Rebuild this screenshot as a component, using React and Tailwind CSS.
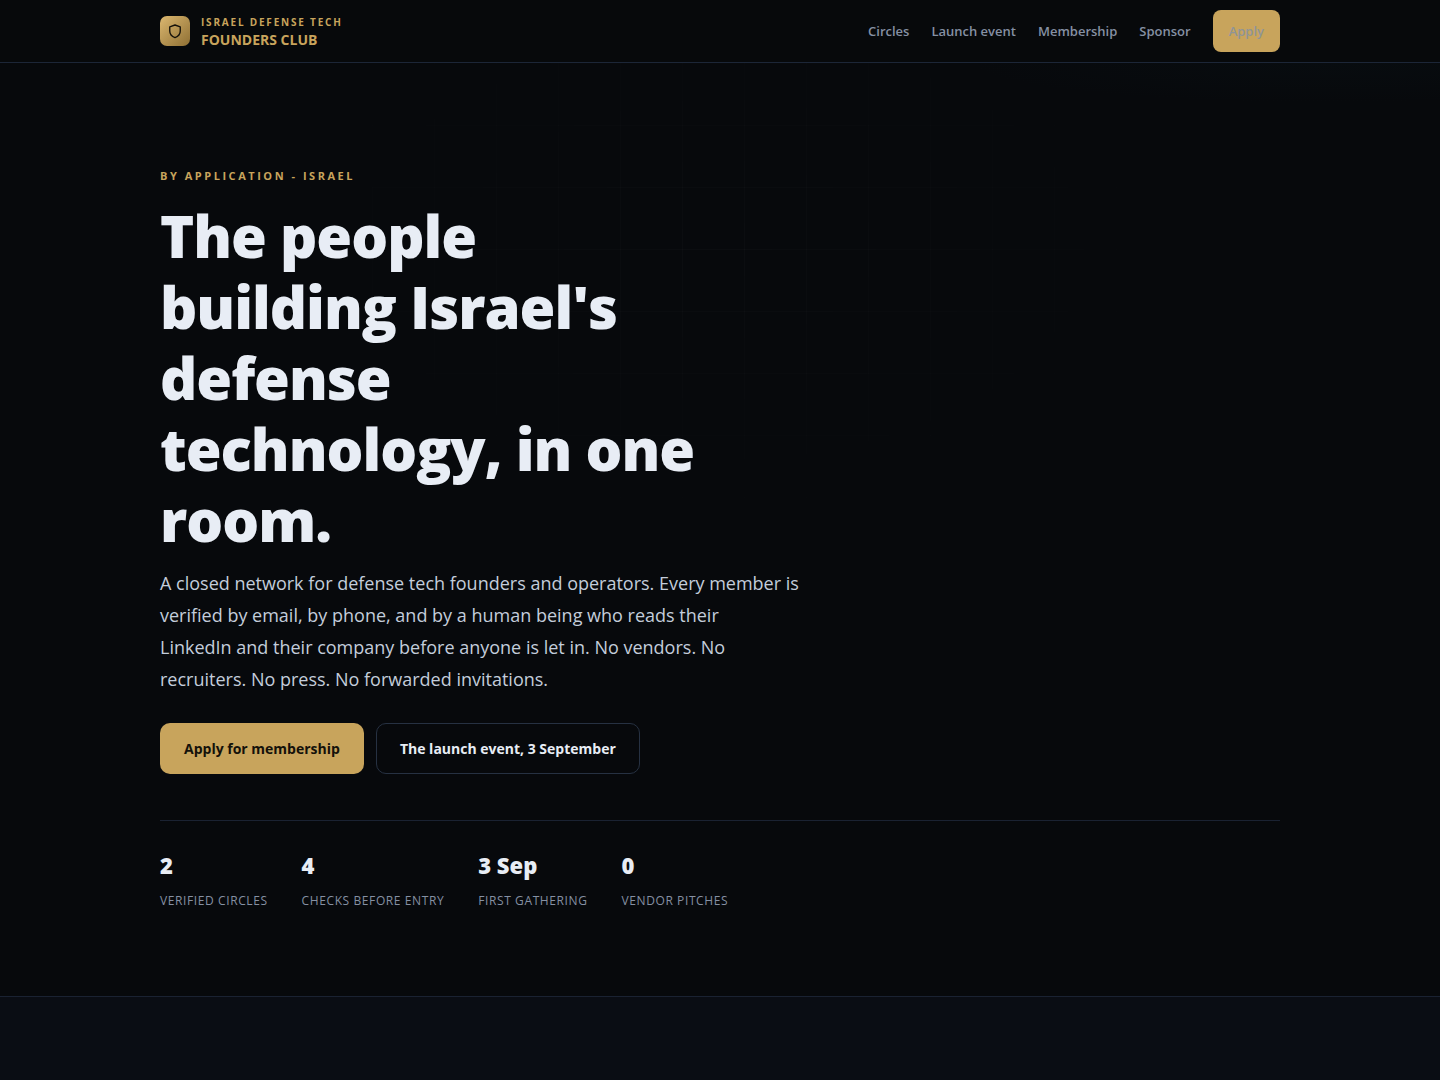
const links = ["Circles", "Launch event", "Membership", "Sponsor"];

const stats = [
  { value: "2", label: "Verified circles" },
  { value: "4", label: "Checks before entry" },
  { value: "3 Sep", label: "First gathering" },
  { value: "0", label: "Vendor pitches" },
];

function ShieldMark() {
  return (
    <svg
      viewBox="0 0 24 24"
      className="size-[18px]"
      fill="none"
      stroke="currentColor"
      strokeWidth="1.800"
      strokeLinejoin="round"
      aria-hidden="true"
    >
      <path d="M12 4l7 2.500v5.500c0 4.300-2.900 7.300-7 8.800-4.100-1.500-7-4.500-7-8.800V6.500z" />
    </svg>
  );
}

function Header() {
  return (
    <header className="border-b border-[#1c2637] bg-[#07090b]">
      <div className="mx-auto flex h-[62px] max-w-[1120px] items-center justify-between">
        <a href="#top" className="flex items-center gap-[11px] text-[#c8a45c]">
          <span className="flex size-[30px] items-center justify-center rounded-[7px] bg-linear-135 from-[#dcb870] to-[#8f7034] text-[#14110a]">
            <ShieldMark />
          </span>
          <span className="flex flex-col font-bold">
            <span className="text-[10px] leading-[18px] tracking-[0.18em] uppercase">
              Israel Defense Tech
            </span>
            <span className="text-[14px] leading-[18px] uppercase">Founders Club</span>
          </span>
        </a>
        <nav className="flex items-center gap-[22px] text-[13px] leading-[22px] font-semibold text-[#8590a3]">
          {links.map((link) => (
            <a key={link} href="#">
              {link}
            </a>
          ))}
          <a
            href="#apply"
            className="flex h-[42px] items-center rounded-lg bg-[#c8a45c] px-4 text-[#8f9496]"
          >
            Apply
          </a>
        </nav>
      </div>
    </header>
  );
}

function Hero() {
  return (
    <section className="relative border-b border-[#1a2232]">
      <div className="pointer-events-none absolute inset-0 bg-[linear-gradient(rgba(255,255,255,0.018)_1px,transparent_1px),linear-gradient(90deg,rgba(255,255,255,0.018)_1px,transparent_1px)] mask-[radial-gradient(ellipse_520px_300px_at_50%_20%,#000,transparent)] bg-size-[62px_62px]" />
      <div className="pointer-events-none absolute inset-0 bg-[radial-gradient(ellipse_360px_40px_at_92%_0%,rgba(20,60,70,0.06),transparent)]" />
      <div className="relative mx-auto max-w-[1120px] pt-[104px] pb-[85px]">
        <p className="text-[11px] leading-[18px] font-bold tracking-[0.23em] text-[#c8a45c] uppercase">
          By application - Israel
        </p>
        <h1 className="mt-[15px] max-w-[560px] text-[58px] leading-[71px] font-black tracking-[-1px] text-[#e8edf5]">
          The people building Israel's defense technology, in one room.
        </h1>
        <p className="mt-3 max-w-[640px] text-[18px] leading-8 text-[#c3cddb]">
          A closed network for defense tech founders and operators. Every member is verified by
          email, by phone, and by a human being who reads their <br className="hidden sm:block" />
          LinkedIn and their company before anyone is let in. No vendors. No recruiters. No press.
          No forwarded invitations.
        </p>
        <div className="mt-7 flex flex-wrap gap-3 text-[14px] font-bold">
          <a
            href="#apply"
            className="flex h-[51px] items-center rounded-[10px] bg-[#c8a45c] px-6 text-[#14110a]"
          >
            Apply for membership
          </a>
          <a
            href="#launch"
            className="flex h-[51px] items-center rounded-[10px] border border-[#263142] px-[23px] text-[#e8edf5]"
          >
            The launch event, 3 September
          </a>
        </div>
        <dl className="mt-[46px] flex flex-wrap gap-[34px] border-t border-[#1a2232] pt-[26px]">
          {stats.map((s) => (
            <div key={s.label} className="flex flex-col-reverse">
              <dt className="text-[12px] leading-5 font-medium tracking-wider text-[#8590a3] uppercase">
                {s.label}
              </dt>
              <dd className="pb-2 text-[22px] leading-9 font-black text-[#e8edf5]">{s.value}</dd>
            </div>
          ))}
        </dl>
      </div>
    </section>
  );
}

export default function App() {
  return (
    <div
      id="top"
      className="flex min-h-screen flex-col bg-[#07090c] font-['Open_Sans','Noto_Sans',sans-serif]"
    >
      <Header />
      <main className="flex grow flex-col">
        <Hero />
        <section className="grow bg-[#0a0d14]" />
      </main>
    </div>
  );
}
